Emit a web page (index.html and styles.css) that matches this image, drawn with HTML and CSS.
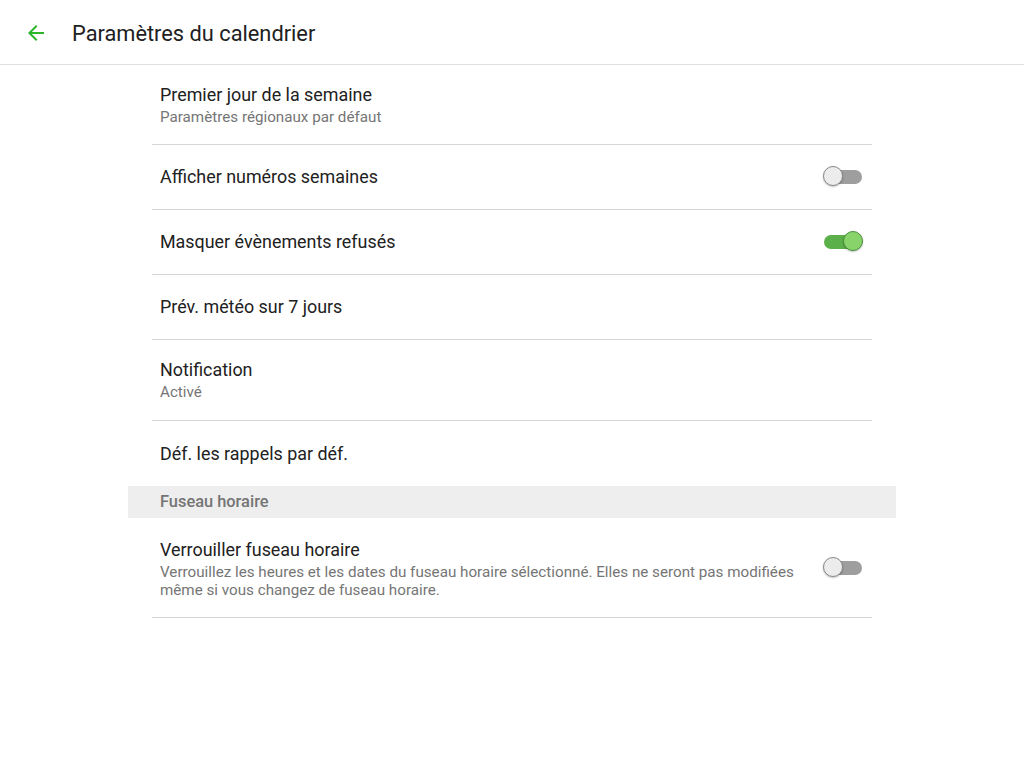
FILE: index.html
```html
<!DOCTYPE html>
<html lang="fr">
<head>
  <meta charset="UTF-8" />
  <title>Paramètres du calendrier</title>
  <link rel="stylesheet" href="styles.css">
</head>
<body>

<header class="topbar">
  <a href="#" class="back" aria-label="Retour">
    <svg width="24" height="24" viewBox="0 0 24 24"><path d="M20 11H7.83l5.59-5.59L12 4l-8 8 8 8 1.41-1.41L7.83 13H20v-2z" fill="#2bb52b"/></svg>
  </a>
  <h1>Paramètres du calendrier</h1>
</header>

<main class="settings">
  <div class="item two">
    <div class="text">
      <div class="title">Premier jour de la semaine</div>
      <div class="sub">Paramètres régionaux par défaut</div>
    </div>
  </div>
  <div class="item">
    <div class="text"><div class="title">Afficher numéros semaines</div></div>
    <span class="switch"></span>
  </div>
  <div class="item">
    <div class="text"><div class="title">Masquer évènements refusés</div></div>
    <span class="switch on"></span>
  </div>
  <div class="item">
    <div class="text"><div class="title">Prév. météo sur 7 jours</div></div>
  </div>
  <div class="item two notif">
    <div class="text">
      <div class="title">Notification</div>
      <div class="sub">Activé</div>
    </div>
  </div>
  <div class="item last">
    <div class="text"><div class="title">Déf. les rappels par déf.</div></div>
  </div>

  <div class="section">Fuseau horaire</div>

  <div class="item three">
    <div class="text">
      <div class="title">Verrouiller fuseau horaire</div>
      <div class="sub">Verrouillez les heures et les dates du fuseau horaire sélectionné. Elles ne seront pas modifiées même si vous changez de fuseau horaire.</div>
    </div>
    <span class="switch"></span>
  </div>
</main>

</body>
</html>
```

FILE: styles.css
```css
body {
  margin: 0;
  font-family: Roboto, "Noto Sans", sans-serif;
  background: #fff;
  color: #212121;
}
.topbar {
  height: 64px;
  display: flex;
  align-items: center;
  border-bottom: 1px solid #e0e0e0;
}
.back {
  display: flex;
  margin-left: 24px;
  margin-top: 2px;
  width: 24px;
  height: 24px;
}
.topbar h1 {
  margin: 2px 0 0 24px;
  font-size: 21.8px;
  font-weight: 400;
  color: #212121;
}
.settings {
  width: 768px;
  margin: 0 auto;
}
.item {
  margin: 0 24px;
  height: 64px;
  padding: 0 8px;
  display: flex;
  align-items: center;
  justify-content: space-between;
  border-bottom: 1px solid #d6d6d6;
}
.item.two {
  height: 79px;
}
.item.notif {
  height: 80px;
}
.item.three {
  height: 99px;
}
.item.last {
  border-bottom: none;
  height: 65px;
}
.title {
  font-size: 17.9px;
  line-height: 22px;
}
.sub {
  font-size: 15.2px;
  line-height: 18px;
  color: #757575;
  margin-top: 2px;
}
.item.three .text {
  max-width: 645px;
  margin-top: 2px;
}
.section {
  height: 32px;
  background: #eeeeee;
  color: #757575;
  font-size: 16.4px;
  font-weight: 500;
  line-height: 32px;
  padding-left: 32px;
}
.switch {
  position: relative;
  width: 38px;
  height: 14px;
  border-radius: 7px;
  background: #9e9e9e;
  margin-right: 2px;
}
.switch::after {
  content: "";
  position: absolute;
  top: -4px;
  left: -1px;
  width: 18px;
  height: 18px;
  border-radius: 50%;
  background: #ececec;
  border: 1px solid #8a8a8a;
  box-shadow: 0 1px 2px rgba(0, 0, 0, 0.25);
}
.switch.on {
  background: #5cb04a;
}
.switch.on::after {
  left: auto;
  right: -1px;
  background: #88d46b;
  border-color: #4b8f3b;
}
```
